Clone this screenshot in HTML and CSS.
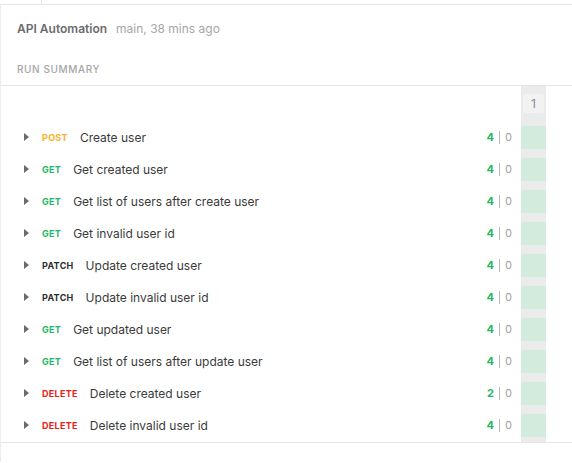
FILE: index.html
```html
<!DOCTYPE html>
<html>
<head>
<meta charset="utf-8">
<link rel="stylesheet" href="styles.css">
</head>
<body>
<div class="topbar"><div class="tab"></div></div>
<div class="panel">
  <div class="header">
    <div class="title"><span class="name">API Automation</span><span class="meta">main, 38 mins ago</span></div>
    <div class="section">RUN SUMMARY</div>
  </div>
  <div class="table">
    <div class="row head">
      <div class="main"></div>
      <div class="col"><div class="iter">1</div></div>
      <div class="pad"></div>
    </div>
    <div class="row">
      <div class="main"><span class="caret"></span><span class="m post">POST</span><span class="req">Create user</span><span class="cnt"><b>4</b><i></i>0</span></div>
      <div class="col"><div class="pass"></div></div><div class="pad"></div>
    </div>
    <div class="row">
      <div class="main"><span class="caret"></span><span class="m get">GET</span><span class="req">Get created user</span><span class="cnt"><b>4</b><i></i>0</span></div>
      <div class="col"><div class="pass"></div></div><div class="pad"></div>
    </div>
    <div class="row">
      <div class="main"><span class="caret"></span><span class="m get">GET</span><span class="req">Get list of users after create user</span><span class="cnt"><b>4</b><i></i>0</span></div>
      <div class="col"><div class="pass"></div></div><div class="pad"></div>
    </div>
    <div class="row">
      <div class="main"><span class="caret"></span><span class="m get">GET</span><span class="req">Get invalid user id</span><span class="cnt"><b>4</b><i></i>0</span></div>
      <div class="col"><div class="pass"></div></div><div class="pad"></div>
    </div>
    <div class="row">
      <div class="main"><span class="caret"></span><span class="m patch">PATCH</span><span class="req">Update created user</span><span class="cnt"><b>4</b><i></i>0</span></div>
      <div class="col"><div class="pass"></div></div><div class="pad"></div>
    </div>
    <div class="row">
      <div class="main"><span class="caret"></span><span class="m patch">PATCH</span><span class="req">Update invalid user id</span><span class="cnt"><b>4</b><i></i>0</span></div>
      <div class="col"><div class="pass"></div></div><div class="pad"></div>
    </div>
    <div class="row">
      <div class="main"><span class="caret"></span><span class="m get">GET</span><span class="req">Get updated user</span><span class="cnt"><b>4</b><i></i>0</span></div>
      <div class="col"><div class="pass"></div></div><div class="pad"></div>
    </div>
    <div class="row">
      <div class="main"><span class="caret"></span><span class="m get">GET</span><span class="req">Get list of users after update user</span><span class="cnt"><b>4</b><i></i>0</span></div>
      <div class="col"><div class="pass"></div></div><div class="pad"></div>
    </div>
    <div class="row">
      <div class="main"><span class="caret"></span><span class="m delete">DELETE</span><span class="req">Delete created user</span><span class="cnt"><b>2</b><i></i>0</span></div>
      <div class="col"><div class="pass"></div></div><div class="pad"></div>
    </div>
    <div class="row">
      <div class="main"><span class="caret"></span><span class="m delete">DELETE</span><span class="req">Delete invalid user id</span><span class="cnt"><b>4</b><i></i>0</span></div>
      <div class="col"><div class="pass"></div></div><div class="pad"></div>
    </div>
  </div>
</div>
</body>
</html>
```
FILE: styles.css
```css
html, body {
  margin: 0;
  padding: 0;
  background: #fff;
  font-family: Inter, "Noto Sans", sans-serif;
  color: #3a3a3a;
}
.topbar {
  height: 4px;
  display: flex;
}
.tab {
  width: 41px;
  border-right: 1px solid #e6e6e6;
}
.panel {
  border-top: 1px solid #e6e6e6;
  border-left: 1px solid #ececec;
  min-height: 458px;
  box-sizing: border-box;
}
.header {
  padding: 16px 0 9px 16px;
  border-bottom: 1px solid #e6e6e6;
}
.title {
  height: 16px;
  line-height: 16px;
  font-size: 12px;
  display: flex;
  gap: 9px;
}
.title .name {
  font-weight: 600;
  color: #6b6b6b;
}
.title .meta {
  color: #a6a6a6;
}
.section {
  margin-top: 25px;
  height: 14px;
  line-height: 14px;
  font-size: 10px;
  font-weight: 500;
  color: #a6a6a6;
  letter-spacing: 0.6px;
}
.table {
  border-bottom: 1px solid #e6e6e6;
}
.row {
  display: flex;
  height: 32px;
}
.row.head {
  height: 36px;
}
.main {
  flex: 1;
  display: flex;
  align-items: center;
  padding-left: 22px;
  padding-right: 9px;
  padding-bottom: 2px;
  box-sizing: border-box;
  font-size: 12px;
}
.col {
  width: 25px;
  background: #ebebeb;
  padding: 4px 0 5px 0;
  box-sizing: border-box;
}
.head .col {
  padding: 8px 2px 0 2px;
}
.iter {
  height: 19px;
  line-height: 19px;
  background: #f2f2f2;
  border-radius: 3px;
  text-align: center;
  font-size: 12px;
  color: #8a8a8a;
}
.pass {
  height: 23px;
  background: #d3ebdd;
}
.pad {
  width: 26px;
}
.caret {
  width: 0;
  height: 0;
  border-top: 4px solid transparent;
  border-bottom: 4px solid transparent;
  border-left: 5px solid #6b6b6b;
  margin-right: 13px;
  margin-left: 1px;
}
.m {
  font-size: 9px;
  font-weight: 700;
  letter-spacing: 0.3px;
  margin-right: 12px;
}
.m.post { color: #f5b22a; }
.m.get { color: #22b864; }
.m.patch { color: #2d2d2d; }
.m.delete { color: #e52318; }
.req {
  flex: 1;
  color: #3a3a3a;
}
.cnt {
  display: flex;
  align-items: center;
  font-size: 11px;
  color: #a0a0a0;
}
.cnt b {
  color: #22b864;
  font-weight: 700;
}
.cnt i {
  width: 1px;
  height: 13px;
  background: #b5b5b5;
  margin: 0 5px;
}
```
